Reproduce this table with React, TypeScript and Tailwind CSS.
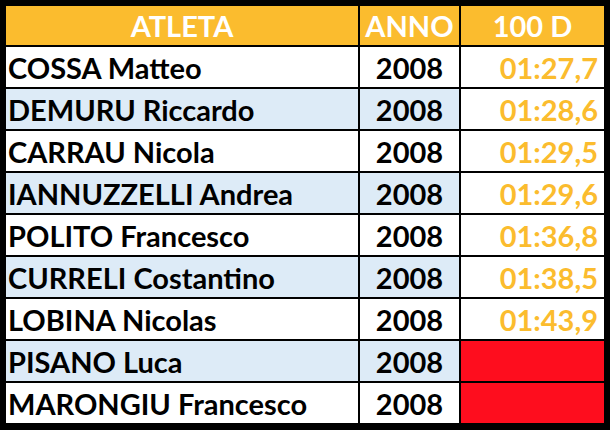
import React from "react";

const rows: { name: string; year: string; time: string | null; blue: boolean }[] = [
  { name: "COSSA Matteo", year: "2008", time: "01:27,7", blue: false },
  { name: "DEMURU Riccardo", year: "2008", time: "01:28,6", blue: true },
  { name: "CARRAU Nicola", year: "2008", time: "01:29,5", blue: false },
  { name: "IANNUZZELLI Andrea", year: "2008", time: "01:29,6", blue: true },
  { name: "POLITO Francesco", year: "2008", time: "01:36,8", blue: false },
  { name: "CURRELI Costantino", year: "2008", time: "01:38,5", blue: true },
  { name: "LOBINA Nicolas", year: "2008", time: "01:43,9", blue: false },
  { name: "PISANO Luca", year: "2008", time: null, blue: true },
  { name: "MARONGIU Francesco", year: "2008", time: null, blue: false },
];

export default function App() {
  return (
    <div
      className="w-[610px] h-[430px] bg-black pt-[6px] px-[6px] pb-[7px] font-bold text-[29px] leading-none"
      style={{ fontFamily: "Lato, 'Open Sans', sans-serif" }}
    >
      <div className="grid grid-cols-[352px_99px_143px] grid-rows-[39px_repeat(9,40px)] gap-[2px]">
        <div className="bg-[#FBBC2E] text-white flex items-center justify-center">ATLETA</div>
        <div className="bg-[#FBBC2E] text-white flex items-center justify-center">ANNO</div>
        <div className="bg-[#FBBC2E] text-white flex items-center justify-center">100 D</div>
        {rows.map((r) => (
          <React.Fragment key={r.name}>
            <div className={`${r.blue ? "bg-[#DDEBF7]" : "bg-white"} text-black flex items-center pl-[2px]`}>
              {r.name}
            </div>
            <div className={`${r.blue ? "bg-[#DDEBF7]" : "bg-white"} text-black flex items-center justify-center`}>
              {r.year}
            </div>
            {r.time ? (
              <div className="bg-white text-[#FBBC2E] flex items-center justify-end pr-[6px]">{r.time}</div>
            ) : (
              <div className="bg-[#FE0D1E]" />
            )}
          </React.Fragment>
        ))}
      </div>
    </div>
  );
}
